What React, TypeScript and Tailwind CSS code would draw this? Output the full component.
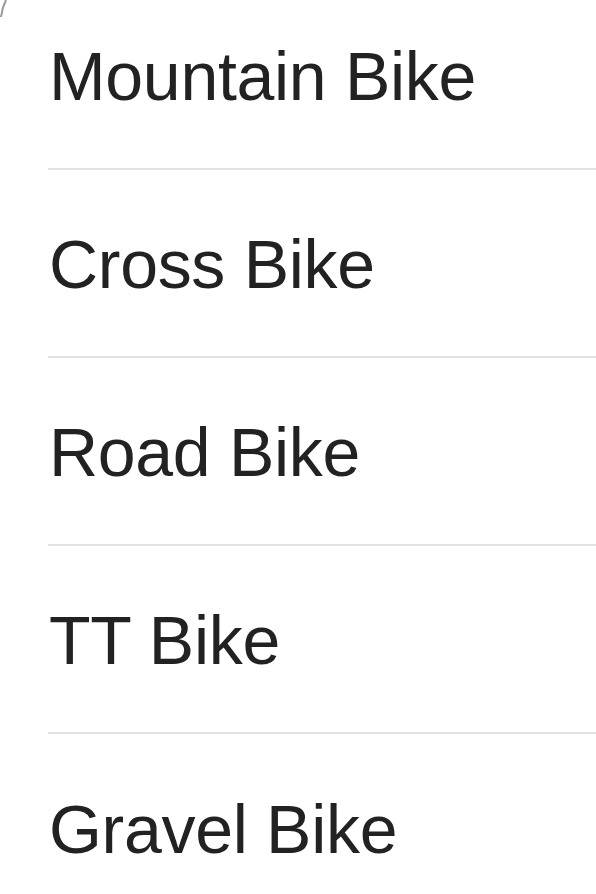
const bikes = ['Mountain Bike', 'Cross Bike', 'Road Bike', 'TT Bike', 'Gravel Bike'];

export default function App() {
  return (
    <div className="relative h-[894px] w-full overflow-hidden bg-white">
      {/* rounded corner fragment at top-left */}
      <svg className="absolute left-0 top-0" width="8" height="18" viewBox="0 0 8 18">
        <path d="M6 0 C4 4 2 9 1 17" fill="none" stroke="#9a9a9a" strokeWidth="2" />
      </svg>
      <ul className="-mt-[18px] pl-[48px]" style={{ fontFamily: '"Liberation Sans", Arial, sans-serif' }}>
        {bikes.map((bike, i) => (
          <li
            key={bike}
            className={`flex h-[188px] items-center text-[68px] leading-none tracking-[-0.3px] text-[#222222] ${
              i < bikes.length - 1 ? 'border-b-2 border-[#e3e3e3]' : ''
            }`}
          >
            <span className="ml-[1px] pt-[2px]">{bike}</span>
          </li>
        ))}
      </ul>
    </div>
  );
}
